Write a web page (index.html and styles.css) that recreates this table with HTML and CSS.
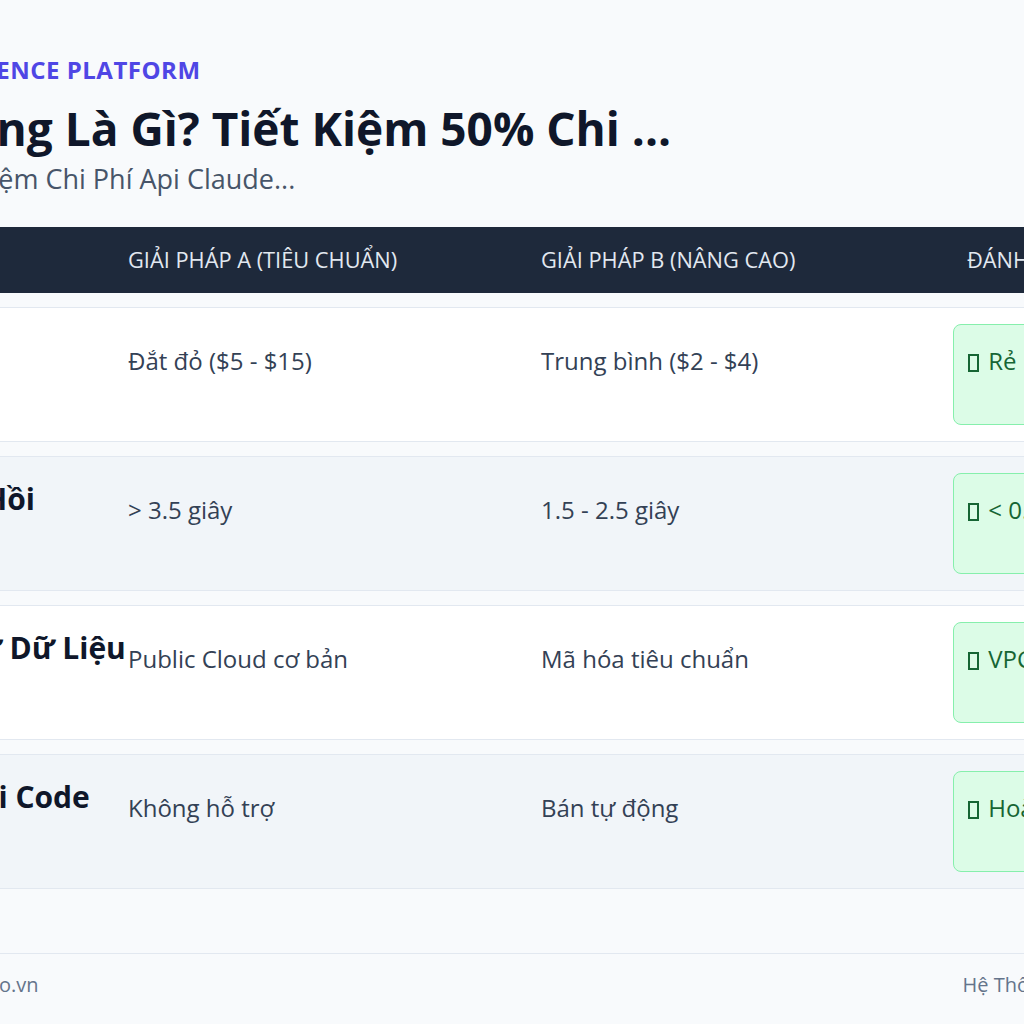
FILE: index.html
```html
<!DOCTYPE html>
<html lang="vi">
<head>
<meta charset="utf-8">
<title>So sánh giải pháp</title>
<link rel="stylesheet" href="styles.css">
</head>
<body>
<div class="page">
  <header class="hero">
    <div class="eyebrow">HOLYSHEEP API INTELLIGENCE PLATFORM</div>
    <h1 class="title">API Dùng Chung Là Gì? Tiết Kiệm 50% Chi ...</h1>
    <p class="subtitle">Cách Đơn Giản Để Tiết Kiệm Chi Phí Api Claude...</p>
  </header>

  <table class="compare">
    <colgroup>
      <col class="c-crit">
      <col class="c-a">
      <col class="c-b">
      <col class="c-c">
    </colgroup>
    <thead>
      <tr>
        <th>Tiêu chí</th>
        <th>Giải pháp A (Tiêu chuẩn)</th>
        <th>Giải pháp B (Nâng cao)</th>
        <th>Đánh giá HolySheep</th>
      </tr>
    </thead>
    <tbody>
      <tr>
        <td class="crit">Chi Phí API / 1M</td>
        <td class="val">Đắt đỏ ($5 - $15)</td>
        <td class="val">Trung bình ($2 - $4)</td>
        <td class="val win"><div class="badge"><span class="ico"></span> Rẻ nhất ($0.42 - $1)<span class="badge-note">Tiết kiệm 85%</span></div></td>
      </tr>
      <tr>
        <td class="crit">Độ Nhạy Phản Hồi</td>
        <td class="val">&gt; 3.5 giây</td>
        <td class="val">1.5 - 2.5 giây</td>
        <td class="val win"><div class="badge"><span class="ico"></span> &lt; 0.8 giây<span class="badge-note">Nhanh gấp 4 lần</span></div></td>
      </tr>
      <tr>
        <td class="crit">Quyền Riêng Tư Dữ Liệu</td>
        <td class="val">Public Cloud cơ bản</td>
        <td class="val">Mã hóa tiêu chuẩn</td>
        <td class="val win"><div class="badge"><span class="ico"></span> VPC riêng biệt<span class="badge-note">Bảo mật tối đa</span></div></td>
      </tr>
      <tr>
        <td class="crit">Tự Động Sửa Lỗi Code</td>
        <td class="val">Không hỗ trợ</td>
        <td class="val">Bán tự động</td>
        <td class="val win"><div class="badge"><span class="ico"></span> Hoàn toàn tự động<span class="badge-note">Tích hợp sẵn</span></div></td>
      </tr>
    </tbody>
  </table>

  <footer class="foot">
    <span class="foot-left">©2025 HolySheep AI · holysheep.io.vn</span>
    <span class="foot-right">Hệ Thống Phân Tích Chi Phí API Tự Động</span>
  </footer>
</div>
</body>
</html>
```

FILE: styles.css
```css
html, body {
  margin: 0;
  padding: 0;
  background: #f8fafc;
  overflow: hidden;
}

body {
  display: flex;
  justify-content: center;
  font-family: "Open Sans", "Noto Sans", "Liberation Sans", sans-serif;
  color: #334155;
}

.page {
  flex: 0 0 1651px;
  width: 1651px;
  padding-top: 55px;
}

.eyebrow {
  font-size: 24px;
  font-weight: 700;
  line-height: 29px;
  letter-spacing: 0.5px;
  color: #4f46e5;
}

.title {
  margin: 16px 0 0;
  font-size: 46px;
  font-weight: 700;
  line-height: 56px;
  color: #0f172a;
}

.subtitle {
  margin: 6px 0 0;
  font-size: 27px;
  line-height: 34px;
  color: #475569;
}

.compare {
  width: 100%;
  margin-top: 17px;
  table-layout: fixed;
  border-collapse: separate;
  border-spacing: 0 14px;
}

.c-crit { width: 417.5px; }
.c-a { width: 413px; }
.c-b { width: 426px; }

.compare th {
  background: #1e293b;
  color: #e2e8f0;
  font-size: 21.8px;
  font-weight: 400;
  line-height: 32px;
  text-transform: uppercase;
  text-align: left;
  padding: 17px 24px;
}

.compare td {
  padding: 16px 24px;
  border-top: 1px solid #e2e8f0;
  border-bottom: 1px solid #e2e8f0;
  background: #ffffff;
  font-size: 24px;
  line-height: 34px;
}

.compare tbody tr:nth-child(even) td {
  background: #f1f5f9;
}

.compare td.crit {
  vertical-align: top;
  padding-top: 23px;
  padding-left: 78px;
  white-space: nowrap;
  font-size: 30px;
  font-weight: 700;
  line-height: 38px;
  color: #0f172a;
}

.compare td.val {
  vertical-align: baseline;
  color: #334155;
}

.compare td.win {
  padding-left: 10px;
}

.badge {
  padding: 19px 14px 20px;
  border: 1px solid #86efac;
  border-radius: 8px;
  background: #dcfce7;
  color: #166534;
}

.ico {
  display: inline-block;
  width: 11px;
  height: 18px;
  margin-right: 3px;
  box-sizing: border-box;
  border: 2px solid currentColor;
  vertical-align: -2px;
}

.badge-note {
  display: block;
  text-align: right;
  font-size: 17px;
  line-height: 26px;
  color: #15803d;
}

.foot {
  display: flex;
  justify-content: space-between;
  margin-top: 50px;
  padding-top: 17px;
  border-top: 1px solid #e2e8f0;
  font-size: 20px;
  line-height: 28px;
  color: #64748b;
}
```
